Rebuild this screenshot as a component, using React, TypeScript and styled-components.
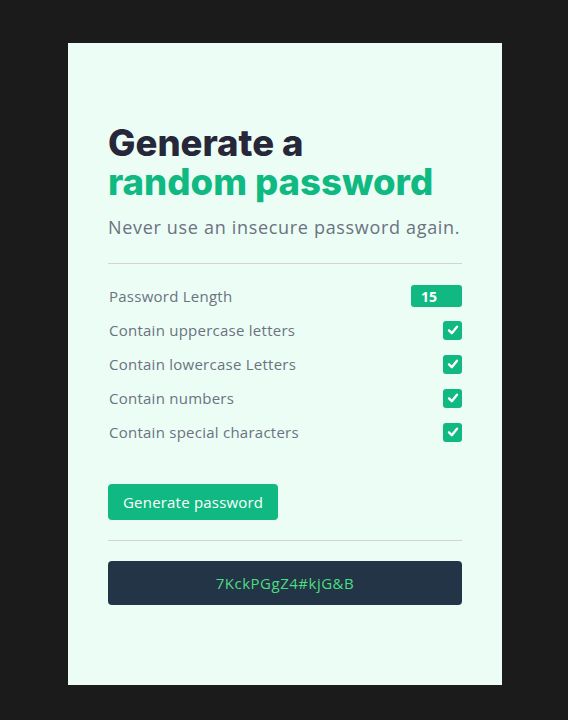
import * as React from 'react';
import styled, { createGlobalStyle } from 'styled-components';

const colors = {
  PAGE: '#1b1b1b',
  CARD: '#ecfdf5',
  GREEN: '#10b981',
  HEADING: '#282639',
  GRAY: '#6b7280',
  LINE: '#d4d4d8',
  DARK: '#243447',
  CODE: '#4ade80',
  WHITE: '#ffffff',
};

const OPTIONS = [
  'Contain uppercase letters',
  'Contain lowercase Letters',
  'Contain numbers',
  'Contain special characters',
];

const GlobalStyle = createGlobalStyle`
  * {
    box-sizing: border-box;
  }

  body {
    margin: 0;
    background: ${colors.PAGE};
    font-family: 'Open Sans', 'Liberation Sans', sans-serif;
  }
`;

const Page = styled.main`
  display: flex;
  justify-content: center;
  padding: 43px 0 35px 2px;
  min-height: 720px;
`;

const Card = styled.section`
  width: 434px;
  padding: 81px 40px 80px;
  background: ${colors.CARD};
`;

const Title = styled.h1`
  margin: 0;
  font-family: Inter, 'Liberation Sans', sans-serif;
  font-size: 36.5px;
  font-weight: 800;
  line-height: 39px;
  color: ${colors.HEADING};
`;

const Accent = styled.span`
  display: block;
  color: ${colors.GREEN};
`;

const Subtitle = styled.p`
  margin: 12px 0 0;
  font-size: 18px;
  line-height: 27px;
  letter-spacing: 0.68px;
  white-space: nowrap;
  color: ${colors.GRAY};
`;

const Divider = styled.hr<{ $top: number; $bottom: number }>`
  margin: ${p => p.$top}px 0 ${p => p.$bottom}px;
  border: none;
  border-top: 1px solid ${colors.LINE};
`;

const Options = styled.div`
  display: flex;
  flex-direction: column;
`;

const Row = styled.label`
  display: flex;
  align-items: center;
  justify-content: space-between;
  height: 34px;
  padding-left: 1px;
  font-size: 15px;
  letter-spacing: 0.25px;
  color: ${colors.GRAY};
`;

const LengthInput = styled.input`
  width: 51px;
  height: 22px;
  padding: 0 0 0 10px;
  border: none;
  border-radius: 3px;
  background: ${colors.GREEN};
  color: ${colors.WHITE};
  font-family: inherit;
  font-size: 14px;
  font-weight: 700;
  outline: none;
`;

const Box = styled.span`
  display: flex;
  align-items: center;
  justify-content: center;
  width: 19px;
  height: 19px;
  border-radius: 3px;
  background: ${colors.GREEN};
`;

const Button = styled.button`
  align-self: flex-start;
  margin-top: 35px;
  height: 36px;
  padding: 0 15px;
  border: none;
  border-radius: 4px;
  background: ${colors.GREEN};
  color: ${colors.WHITE};
  font-family: inherit;
  font-size: 15px;
  font-weight: 500;
  letter-spacing: 0.2px;
  cursor: pointer;
`;

const Output = styled.div`
  display: flex;
  align-items: center;
  justify-content: center;
  height: 44px;
  border-radius: 4px;
  background: ${colors.DARK};
  color: ${colors.CODE};
  font-size: 15px;
  letter-spacing: 0.5px;
`;

const Check = () => (
  <svg width="12" height="12" viewBox="0 0 12 12" fill="none">
    <path
      d="M2 6.4 L4.8 9.2 L10 2.8"
      stroke={colors.WHITE}
      strokeWidth="2.4"
      strokeLinecap="round"
      strokeLinejoin="round"
    />
  </svg>
);

export default function App() {
  const [length, setLength] = React.useState('15');

  return (
    <>
      <GlobalStyle />
      <Page>
        <Card>
          <Title>
            Generate a<Accent>random password</Accent>
          </Title>
          <Subtitle>Never use an insecure password again.</Subtitle>
          <Divider $top={22} $bottom={15} />
          <Options>
            <Row>
              Password Length
              <LengthInput value={length} onChange={e => setLength(e.target.value)} />
            </Row>
            {OPTIONS.map(option => (
              <Row key={option}>
                {option}
                <Box>
                  <Check />
                </Box>
              </Row>
            ))}
          </Options>
          <Button>Generate password</Button>
          <Divider $top={20} $bottom={20} />
          <Output>7KckPGgZ4#kjG&amp;B</Output>
        </Card>
      </Page>
    </>
  );
}
